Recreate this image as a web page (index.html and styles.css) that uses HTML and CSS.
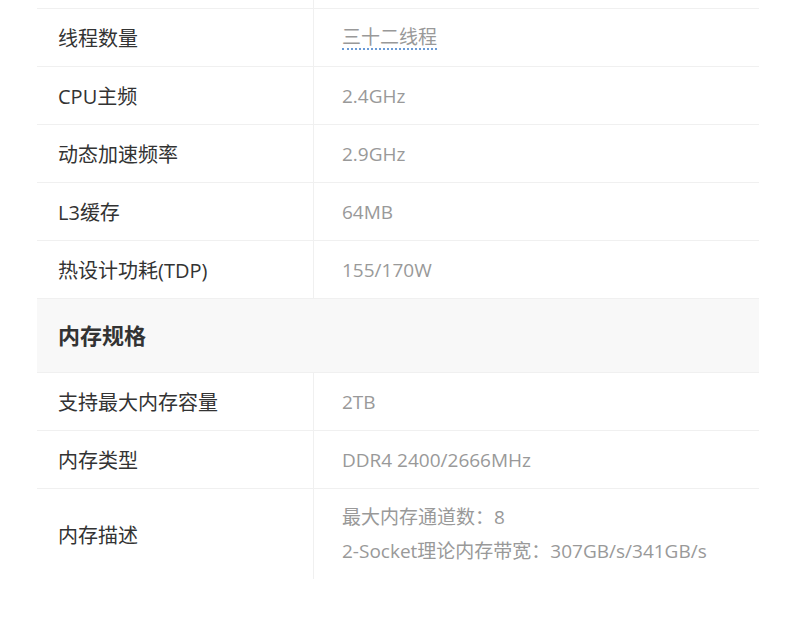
FILE: index.html
```html
<!DOCTYPE html>
<html lang="zh-CN">
<head>
<meta charset="utf-8">
<title>规格参数</title>
<link rel="stylesheet" href="styles.css">
</head>
<body>
<div class="spec">
  <div class="row row-cut"><div class="k"></div><div class="v"></div></div>
  <div class="row"><div class="k">线程数量</div><div class="v"><span class="dotted">三十二线程</span></div></div>
  <div class="row"><div class="k">CPU主频</div><div class="v">2.4GHz</div></div>
  <div class="row"><div class="k">动态加速频率</div><div class="v">2.9GHz</div></div>
  <div class="row"><div class="k">L3缓存</div><div class="v">64MB</div></div>
  <div class="row"><div class="k">热设计功耗(TDP)</div><div class="v">155/170W</div></div>
  <div class="section">内存规格</div>
  <div class="row"><div class="k">支持最大内存容量</div><div class="v">2TB</div></div>
  <div class="row"><div class="k">内存类型</div><div class="v">DDR4 2400/2666MHz</div></div>
  <div class="row row-last"><div class="k">内存描述</div><div class="v multi"><div>最大内存通道数：8</div><div>2-Socket理论内存带宽：307GB/s/341GB/s</div></div></div>
</div>
</body>
</html>
```
FILE: styles.css
```css
html, body {
  margin: 0;
  padding: 0;
  background: #ffffff;
}
body {
  font-family: "Open Sans", "Noto Sans CJK SC", sans-serif;
}
.spec {
  width: 722px;
  margin-left: 37px;
}
.row {
  display: flex;
  height: 58px;
  border-bottom: 1px solid #f0f0f0;
  box-sizing: border-box;
}
.row-cut {
  height: 9px;
}
.row-last {
  height: 90px;
  border-bottom: none;
}
.k {
  width: 277px;
  flex: none;
  border-right: 1px solid #f0f0f0;
  padding-left: 21px;
  box-sizing: border-box;
  display: flex;
  align-items: center;
  font-size: 20px;
  color: #333333;
}
.v {
  flex: 1;
  padding-left: 28px;
  display: flex;
  align-items: center;
  font-size: 19px;
  color: #999999;
}
.v.multi {
  flex-direction: column;
  align-items: flex-start;
  justify-content: center;
  line-height: 34px;
}
.dotted {
  border-bottom: 2px dotted #6a9bd6;
  line-height: 22px;
}
.section {
  height: 74px;
  background: #f8f8f8;
  border-bottom: 1px solid #f0f0f0;
  box-sizing: border-box;
  padding-left: 21px;
  padding-bottom: 4px;
  display: flex;
  align-items: center;
  font-size: 22px;
  font-weight: bold;
  color: #333333;
}
```
